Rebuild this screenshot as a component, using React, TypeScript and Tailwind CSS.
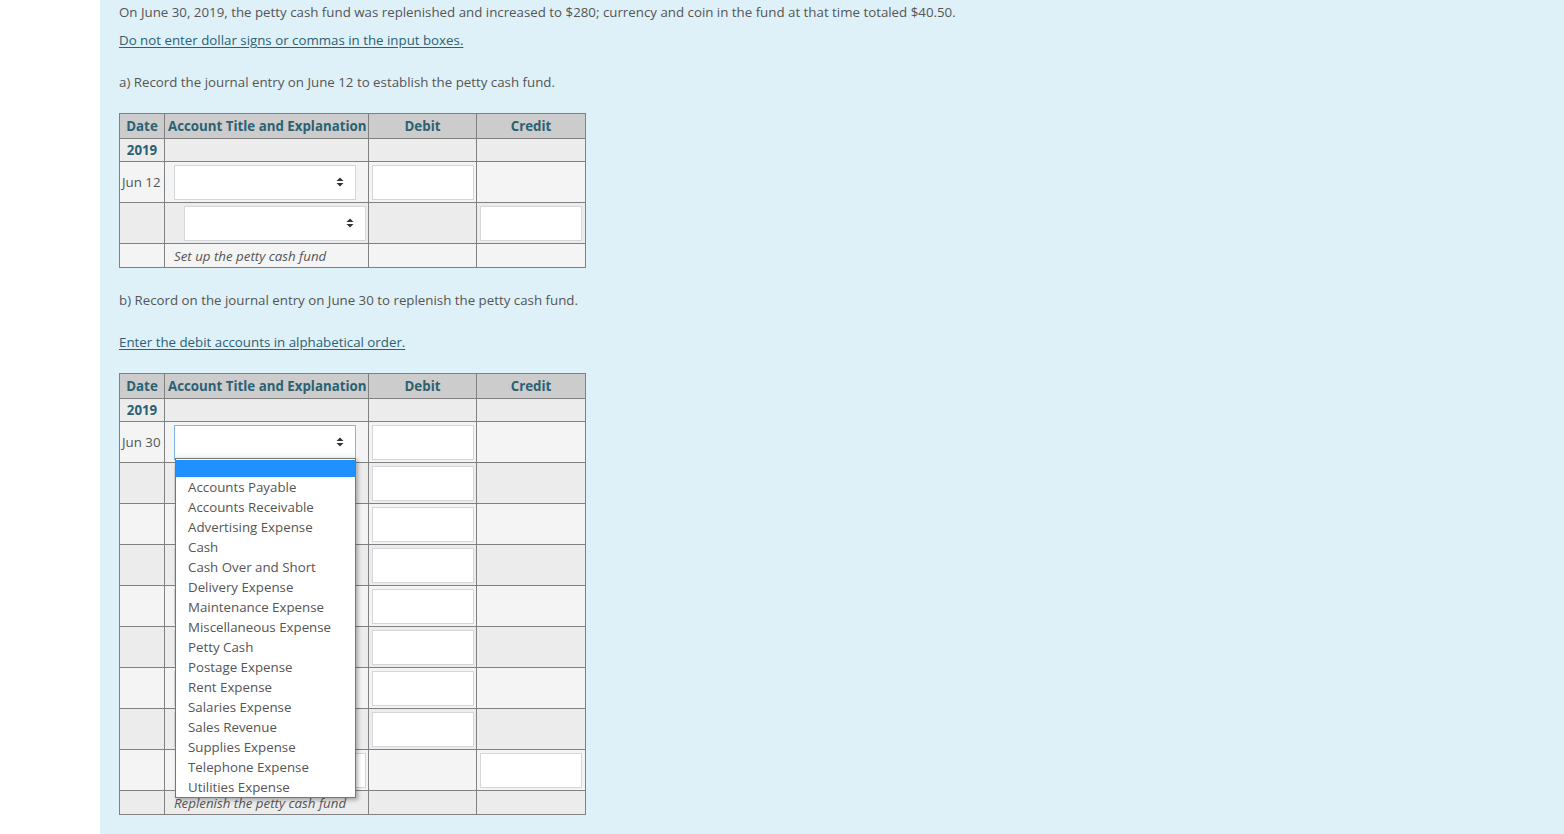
const FONT = { fontFamily: '"Open Sans", "Noto Sans", sans-serif' };

const ACCOUNTS = [
  'Accounts Payable',
  'Accounts Receivable',
  'Advertising Expense',
  'Cash',
  'Cash Over and Short',
  'Delivery Expense',
  'Maintenance Expense',
  'Miscellaneous Expense',
  'Petty Cash',
  'Postage Expense',
  'Rent Expense',
  'Salaries Expense',
  'Sales Revenue',
  'Supplies Expense',
  'Telephone Expense',
  'Utilities Expense',
];

function Caret() {
  return (
    <svg width="8" height="10" viewBox="0 0 8 10" className="shrink-0">
      <path d="M4 0.5 L7.5 4 L0.5 4 Z" fill="#333" />
      <path d="M4 9.5 L7.5 6 L0.5 6 Z" fill="#333" />
    </svg>
  );
}

function Select({ indent = false, focused = false }: { indent?: boolean; focused?: boolean }) {
  return (
    <div
      className={`h-[35px] w-[182px] bg-white flex items-center justify-end pr-[11px] border ${
        indent ? 'ml-[19px]' : 'ml-[9px]'
      } ${
        focused
          ? 'border-[#7fb8e6] shadow-[inset_0_-6px_8px_-6px_rgba(0,0,0,0.12)]'
          : 'border-[#d3d7db]'
      }`}
    >
      <Caret />
    </div>
  );
}

function NumInput() {
  return <div className="h-[35px] w-[102px] mx-auto bg-white border border-[#d3d7db]" />;
}

type Row = { date?: string; indent?: boolean; side: 'debit' | 'credit'; focused?: boolean };

function Journal({ rows, note, dropdown }: { rows: Row[]; note: string; dropdown?: boolean }) {
  const cell = 'border border-[#808080] p-0';
  return (
    <div className="relative w-[466px]">
      <table className="w-[466px] border-collapse border border-[#333] table-fixed text-[13.3px] text-[#555]">
        <colgroup>
          <col className="w-[45px]" />
          <col className="w-[204px]" />
          <col className="w-[108px]" />
          <col className="w-[109px]" />
        </colgroup>
        <thead>
          <tr className="h-[25px] bg-[#cccccc] text-[#2b6172] font-bold">
            <th className={`${cell} text-center`}>Date</th>
            <th className={`${cell} text-left pl-[3px] whitespace-nowrap`}>Account Title and Explanation</th>
            <th className={`${cell} text-center`}>Debit</th>
            <th className={`${cell} text-center`}>Credit</th>
          </tr>
        </thead>
        <tbody>
          <tr className="h-[23px] bg-[#ececec]">
            <td className={`${cell} text-center font-bold text-[#2b6172]`}>2019</td>
            <td className={cell} />
            <td className={cell} />
            <td className={cell} />
          </tr>
          {rows.map((r, i) => (
            <tr key={i} className={`h-[41px] ${i % 2 === 0 ? 'bg-[#f4f4f4]' : 'bg-[#ececec]'}`}>
              <td className={`${cell} pl-[2px] whitespace-nowrap`}>{r.date ?? ''}</td>
              <td className={cell}>
                <Select indent={r.indent} focused={r.focused} />
              </td>
              <td className={cell}>{r.side === 'debit' && <NumInput />}</td>
              <td className={cell}>{r.side === 'credit' && <NumInput />}</td>
            </tr>
          ))}
          <tr className={`h-[24px] ${rows.length % 2 === 0 ? 'bg-[#f4f4f4]' : 'bg-[#ececec]'}`}>
            <td className={cell} />
            <td className={`${cell} pl-[9px] italic whitespace-nowrap`}>{note}</td>
            <td className={cell} />
            <td className={cell} />
          </tr>
        </tbody>
      </table>
      {dropdown && (
        <div className="absolute left-[56px] top-[85px] w-[181px] bg-white border border-[#767676] shadow-[2px_2px_4px_rgba(0,0,0,0.3)] pt-px text-[13.3px] text-[#555]">
          <div className="h-[17px] bg-[#1e90ff]" />
          {ACCOUNTS.map((a) => (
            <div key={a} className="h-[20px] leading-[20px] pl-[12px] whitespace-nowrap">
              {a}
            </div>
          ))}
        </div>
      )}
    </div>
  );
}

export default function App() {
  const rowsA: Row[] = [
    { date: 'Jun 12', side: 'debit' },
    { indent: true, side: 'credit' },
  ];
  const rowsB: Row[] = [
    { date: 'Jun 30', side: 'debit', focused: true },
    { side: 'debit' },
    { side: 'debit' },
    { side: 'debit' },
    { side: 'debit' },
    { side: 'debit' },
    { side: 'debit' },
    { side: 'debit' },
    { indent: true, side: 'credit' },
  ];

  return (
    <div className="flex min-h-[834px] bg-white" style={FONT}>
      <div className="w-[100px] shrink-0" />
      <main className="flex-1 bg-[#dff1f8] pl-[19px] pb-10 text-[13.3px] leading-5 text-[#555]">
        <p className="mt-[2px]">
          On June 30, 2019, the petty cash fund was replenished and increased to $280; currency and coin in the fund at that time totaled $40.50.
        </p>
        <p className="mt-2 text-[#2b6172] underline underline-offset-2">Do not enter dollar signs or commas in the input boxes.</p>
        <p className="mt-[22px]">a) Record the journal entry on June 12 to establish the petty cash fund.</p>
        <div className="mt-[21px]">
          <Journal rows={rowsA} note="Set up the petty cash fund" />
        </div>
        <p className="mt-[22px]">b) Record on the journal entry on June 30 to replenish the petty cash fund.</p>
        <p className="mt-[22px] text-[#2b6172] underline underline-offset-2">Enter the debit accounts in alphabetical order.</p>
        <div className="mt-[21px]">
          <Journal rows={rowsB} note="Replenish the petty cash fund" dropdown />
        </div>
      </main>
    </div>
  );
}
